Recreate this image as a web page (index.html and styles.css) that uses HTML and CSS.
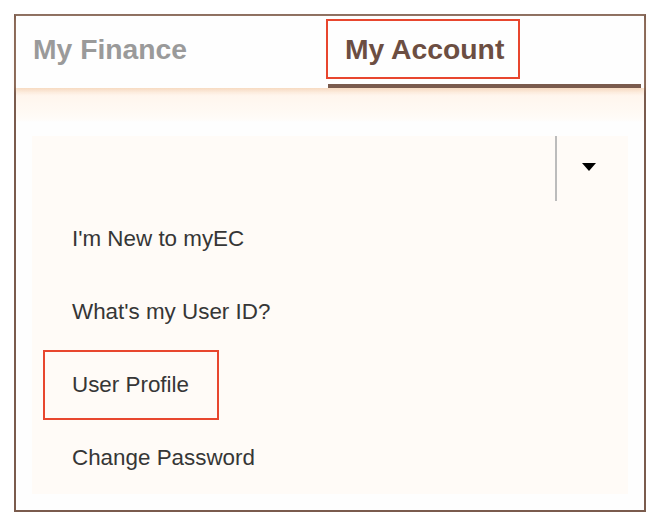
FILE: index.html
```html
<!DOCTYPE html>
<html lang="en">
<head>
<meta charset="utf-8">
<title>My Account</title>
<link rel="stylesheet" href="styles.css">
</head>
<body>
<div class="card">
  <div class="tabs">
    <div class="tab">My Finance</div>
    <div class="tab active">My Account<span class="mark mark-tab"></span></div>
  </div>
  <div class="body">
    <div class="panel">
      <div class="select-row">
        <div class="select-value"></div>
        <div class="select-divider"></div>
        <div class="select-arrow"><span class="caret"></span></div>
      </div>
      <ul class="menu">
        <li class="item">I'm New to myEC</li>
        <li class="item">What's my User ID?</li>
        <li class="item">User Profile<span class="mark mark-item"></span></li>
        <li class="item">Change Password</li>
      </ul>
    </div>
  </div>
</div>
</body>
</html>
```

FILE: styles.css
```css
html, body {
  margin: 0;
  padding: 0;
  background: #ffffff;
}

body {
  font-family: "Liberation Sans", Arial, Helvetica, sans-serif;
}

.card {
  margin: 14px 0 0 14px;
  width: 628px;
  height: 494px;
  border: 2px solid #7a5b4d;
  border-top-color: #8a6d5e;
  background: #fefefe;
  display: flex;
  flex-direction: column;
}

.tabs {
  display: flex;
  height: 72px;
  background: #fefefe;
  position: relative;
  z-index: 1;
  box-shadow: 0 2px 5px rgba(240, 196, 156, 0.45);
}

.tab {
  position: relative;
  width: 295px;
  padding: 17px 0 0 17px;
  font-size: 28.3px;
  line-height: 32px;
  font-weight: bold;
  color: #9a9a9a;
  box-sizing: content-box;
}

.tab.active {
  width: 296px;
  height: 51px;
  color: #6c4e42;
  border-bottom: 4px solid #7a5b4d;
}

.mark {
  position: absolute;
  border: 2px solid #e8462e;
  box-sizing: border-box;
  pointer-events: none;
}

.mark-tab {
  left: -2px;
  top: 3px;
  width: 194px;
  height: 60px;
}

.body {
  flex: 1;
  padding: 48px 16px 16px 16px;
  background: linear-gradient(#fbe8d7 0px, #fff6ee 8px, #fffaf5 26px, #fffcf9 32px, #fefefe 34px);
}

.panel {
  background: #fffbf7;
  height: 358px;
}

.select-row {
  display: flex;
  height: 66px;
  padding-right: 5px;
}

.select-value {
  flex: 1;
}

.select-divider {
  width: 2px;
  height: 65px;
  background: #bcbcbc;
}

.select-arrow {
  width: 66px;
  display: flex;
  align-items: center;
  justify-content: center;
  padding-bottom: 5px;
}

.caret {
  width: 0;
  height: 0;
  border-left: 7.5px solid transparent;
  border-right: 7.5px solid transparent;
  border-top: 8px solid #000000;
  margin-left: -2px;
}

.menu {
  list-style: none;
  margin: 0;
  padding: 0;
}

.item {
  position: relative;
  height: 73px;
  line-height: 73px;
  padding-left: 40px;
  font-size: 22.4px;
  color: #363636;
}

.mark-item {
  left: 11px;
  top: 2px;
  width: 176px;
  height: 70px;
}
```
